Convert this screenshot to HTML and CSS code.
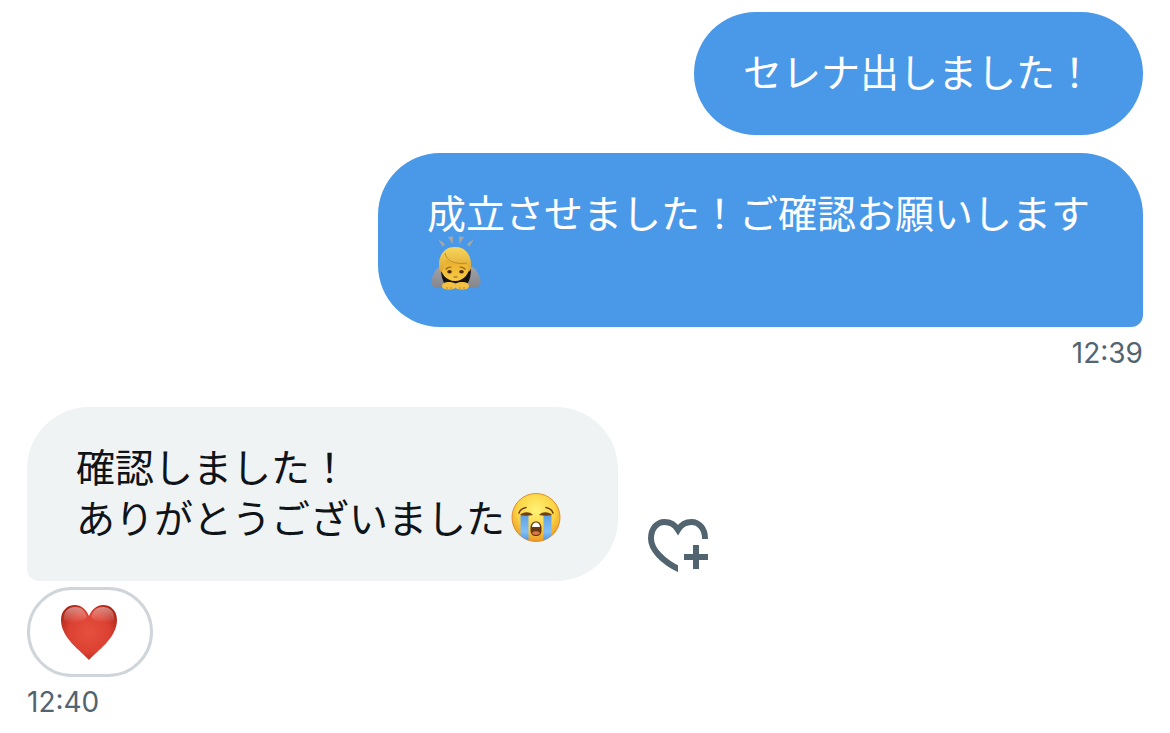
FILE: index.html
```html
<!DOCTYPE html>
<html lang="ja">
<head>
    <meta charset="UTF-8">
    <meta name="viewport" content="width=device-width, initial-scale=1.0">
    <title>メッセージ</title>
    <link rel="stylesheet" href="styles.css">
</head>
<body>

<main class="chat">
    <!-- Sent messages -->
    <section class="group sent">
        <p class="bubble">セレナ出しました！</p>
        <p class="bubble last">成立させました！ご確認お願いします<svg class="emoji" viewBox="0 -3 58 51" role="img" aria-label="お辞儀">
            <defs>
                <linearGradient id="hair" x1="0" y1="0" x2="0" y2="1">
                    <stop offset="0" stop-color="#f8d65c"/>
                    <stop offset="1" stop-color="#dda52f"/>
                </linearGradient>
                <linearGradient id="skin" x1="0" y1="0" x2="0" y2="1">
                    <stop offset="0.400" stop-color="#e9ae2c"/>
                    <stop offset="1" stop-color="#f8cc45"/>
                </linearGradient>
                <linearGradient id="sleeve" x1="0" y1="0" x2="0" y2="1">
                    <stop offset="0" stop-color="#a2a3a9"/>
                    <stop offset="1" stop-color="#85868d"/>
                </linearGradient>
            </defs>
            <g fill="#aaa79f">
                <path d="M11-1l7 5-2.500 2.500z"/>
                <path d="M21-3l5-.5-.5 7.500z"/>
                <path d="M32-3.500l5 .5-4.500 7z"/>
                <path d="M47-1l-7 5 2.500 2.500z"/>
            </g>
            <path d="M15 26c-4 1-7 4-8 8-2 3-3 6-2.500 9 .5 4 4 5 7.500 5h34c3.500 0 7-1 7.500-5 .5-3-.5-6-2.500-9-1-4-4-7-8-8z" fill="url(#sleeve)"/>
            <path d="M14 29c0 5 1 10 3 14h24c2-4 3-9 3-14z" fill="#15110f"/>
            <path d="M28 7c-10 0-15 8-15 17s6 17 15 17 15-8 15-17S38 7 28 7z" fill="url(#skin)"/>
            <path d="M12.500 30C10 16 17 7 28 7s18 9 15.500 23l-2 2c0-4-.5-7-2-9-9 2-17 0-20-4-1 5-3 9-5 13z" fill="url(#hair)"/>
            <path d="M18 13c1 8 11 12 22 10" fill="none" stroke="#c58c22" stroke-width="1"/>
            <g fill="none" stroke="#8c5a14" stroke-width="1.200" stroke-linecap="round">
                <path d="M19 29c1-1 3-2 5-2"/>
                <path d="M38 29c-1-1-3-2-5-2"/>
                <path d="M27 37h3"/>
            </g>
            <ellipse cx="22.500" cy="31.800" rx="2.300" ry="1.800" fill="#4b2a0c"/>
            <ellipse cx="34.500" cy="31.800" rx="2.300" ry="1.800" fill="#4b2a0c"/>
            <path d="M15 46c0-2.500 3-4 7-4s7 1.500 7 4-3 3.500-7 3.500-7-1-7-3.500z" fill="#f4c043"/>
            <path d="M28 46c0-2.500 3-4 7-4s7 1.500 7 4-3 3.500-7 3.500-7-1-7-3.500z" fill="#f4c043"/>
            <path d="M20 47v2M24 47v2M33 47v2M37 47v2" stroke="#c08a22" stroke-width="1"/>
        </svg></p>
        <time class="time">12:39</time>
    </section>

    <!-- Received messages -->
    <section class="group received">
        <div class="row">
            <p class="bubble last">確認しました！<br>ありがとうございました<svg class="emoji wide" viewBox="0 -3 64 51" role="img" aria-label="大泣き">
                <defs>
                    <radialGradient id="face" cx="0.5" cy="0.35" r="0.65">
                        <stop offset="0" stop-color="#fff277"/>
                        <stop offset="0.600" stop-color="#fcd444"/>
                        <stop offset="1" stop-color="#ec9826"/>
                    </radialGradient>
                    <linearGradient id="tears" x1="0" y1="0" x2="0" y2="1">
                        <stop offset="0" stop-color="#5d9fe2"/>
                        <stop offset="0.600" stop-color="#82c0f6"/>
                        <stop offset="1" stop-color="#4088d8"/>
                    </linearGradient>
                    <clipPath id="faceClip"><circle cx="31" cy="23.500" r="24"/></clipPath>
                </defs>
                <circle cx="31" cy="23.500" r="24" fill="url(#face)" stroke="#df8f2a" stroke-width="1"/>
                <path d="M15.500 21h8v28h-8zM38.500 21h8v28h-8z" fill="url(#tears)" clip-path="url(#faceClip)"/>
                <g fill="none" stroke="#71400f" stroke-linecap="round">
                    <path d="M14 19c1-3 4-5 7-5.500" stroke-width="1.600"/>
                    <path d="M48 19c-1-3-4-5-7-5.500" stroke-width="1.600"/>
                </g>
                <path d="M15 21c3-3 9-4 13 0-4 1-9 1-13 0z" fill="#71400f"/>
                <path d="M47 21c-3-3-9-4-13 0 4 1 9 1 13 0z" fill="#71400f"/>
                <path d="M25.500 34c0-4 2-6.500 5.500-6.500s5.500 2.500 5.500 6.500v2c0 4-2 6-5.500 6s-5.500-2-5.500-6z" fill="#693810"/>
                <path d="M27 33c0-3 2-4.500 4-4.500s4 1.500 4 4.500z" fill="#fff"/>
                <path d="M27 39c1-2.500 7-2.500 8 0-1 2.500-7 2.500-8 0z" fill="#d9764c"/>
            </svg></p>
            <button class="react" type="button" aria-label="リアクションを追加">
                <svg viewBox="0 -0.333 24 24">
                    <clipPath id="heartCut"><path d="M0 0h24v9.700H12V24H0z"/></clipPath>
                    <path d="M21 11V9.500C21 6.200 19 4 16.500 4 14.500 4 13 5 12 6.600 11 5 9.500 4 7.500 4 5 4 3 6.200 3 9.500c0 3.500 3.500 7.500 10 10.600" fill="none" stroke="currentColor" stroke-width="2" clip-path="url(#heartCut)"/>
                    <path d="M17 11.700h2v3h3v2h-3v3h-2v-3h-3v-2h3z" fill="currentColor"/>
                </svg>
            </button>
        </div>
        <button class="reaction" type="button" aria-label="ハート">
            <svg viewBox="1 -1 58 58">
                <defs>
                    <radialGradient id="heart" cx="0.5" cy="0.5" r="0.6">
                        <stop offset="0" stop-color="#e5503d"/>
                        <stop offset="0.600" stop-color="#dc4132"/>
                        <stop offset="1" stop-color="#a92518"/>
                    </radialGradient>
                    <linearGradient id="shine" x1="0" y1="0" x2="0" y2="1">
                        <stop offset="0" stop-color="#fff" stop-opacity="0.45"/>
                        <stop offset="1" stop-color="#fff" stop-opacity="0"/>
                    </linearGradient>
                </defs>
                <path d="M29 56C21 47 1 34 1 16 1 7 7 1 15 1c6 0 11 4 14 11C32 5 37 1 43 1c8 0 14 6 14 15 0 18-20 31-28 40z" fill="url(#heart)"/>
                <path d="M4 16C3 8 8 3 15 3s10 4 12 10c-5 6-17 8-23 3z" fill="url(#shine)"/>
                <path d="M54 16c1-8-4-13-11-13s-10 4-12 10c5 6 17 8 23 3z" fill="url(#shine)"/>
            </svg>
        </button>
        <time class="time">12:40</time>
    </section>
</main>

</body>
</html>
```
FILE: styles.css
```css
* {
    box-sizing: border-box;
}

body {
    margin: 0;
    background: #fff;
    color: #0f1419;
    font-family: "Noto Sans CJK JP", sans-serif;
}

.chat {
    display: flex;
    flex-direction: column;
    gap: 35px;
    padding: 12px 27px;
}

.group {
    display: flex;
    flex-direction: column;
}

.sent {
    align-items: flex-end;
    gap: 18px;
}

.received {
    align-items: flex-start;
    gap: 6px;
}

/* Bubbles */
.bubble {
    margin: 0;
    padding: 33px 49px 39px;
    border-radius: 62px;
    font-size: 39px;
    line-height: 51px;
}

.sent .bubble {
    max-width: 765px;
    background: #4a99e9;
    color: #fff;
}

.sent .last {
    border-bottom-right-radius: 12px;
}

.received .bubble {
    background: #eff3f4;
}

.received .last {
    border-bottom-left-radius: 12px;
}

.emoji {
    width: 58px;
    height: 51px;
    vertical-align: top;
    overflow: visible;
}

.emoji.wide {
    width: 64px;
}

/* Time under a group */
.time {
    color: #536471;
    font-family: Inter, sans-serif;
    font-size: 28px;
    line-height: 38px;
}

.sent .time {
    margin-top: -11px;
}

/* Reactions */
.row {
    display: flex;
    align-items: flex-end;
    gap: 24px;
}

.react {
    width: 72px;
    height: 72px;
    padding: 0;
    border: none;
    background: none;
    color: #536471;
    cursor: pointer;
}

.react svg {
    display: block;
}

.reaction {
    display: flex;
    align-items: center;
    justify-content: center;
    width: 126px;
    height: 90px;
    padding: 0;
    border: 3px solid #cfd5da;
    border-radius: 45px;
    background: #fff;
    cursor: pointer;
}

.reaction svg {
    width: 58px;
    height: 58px;
}
```
